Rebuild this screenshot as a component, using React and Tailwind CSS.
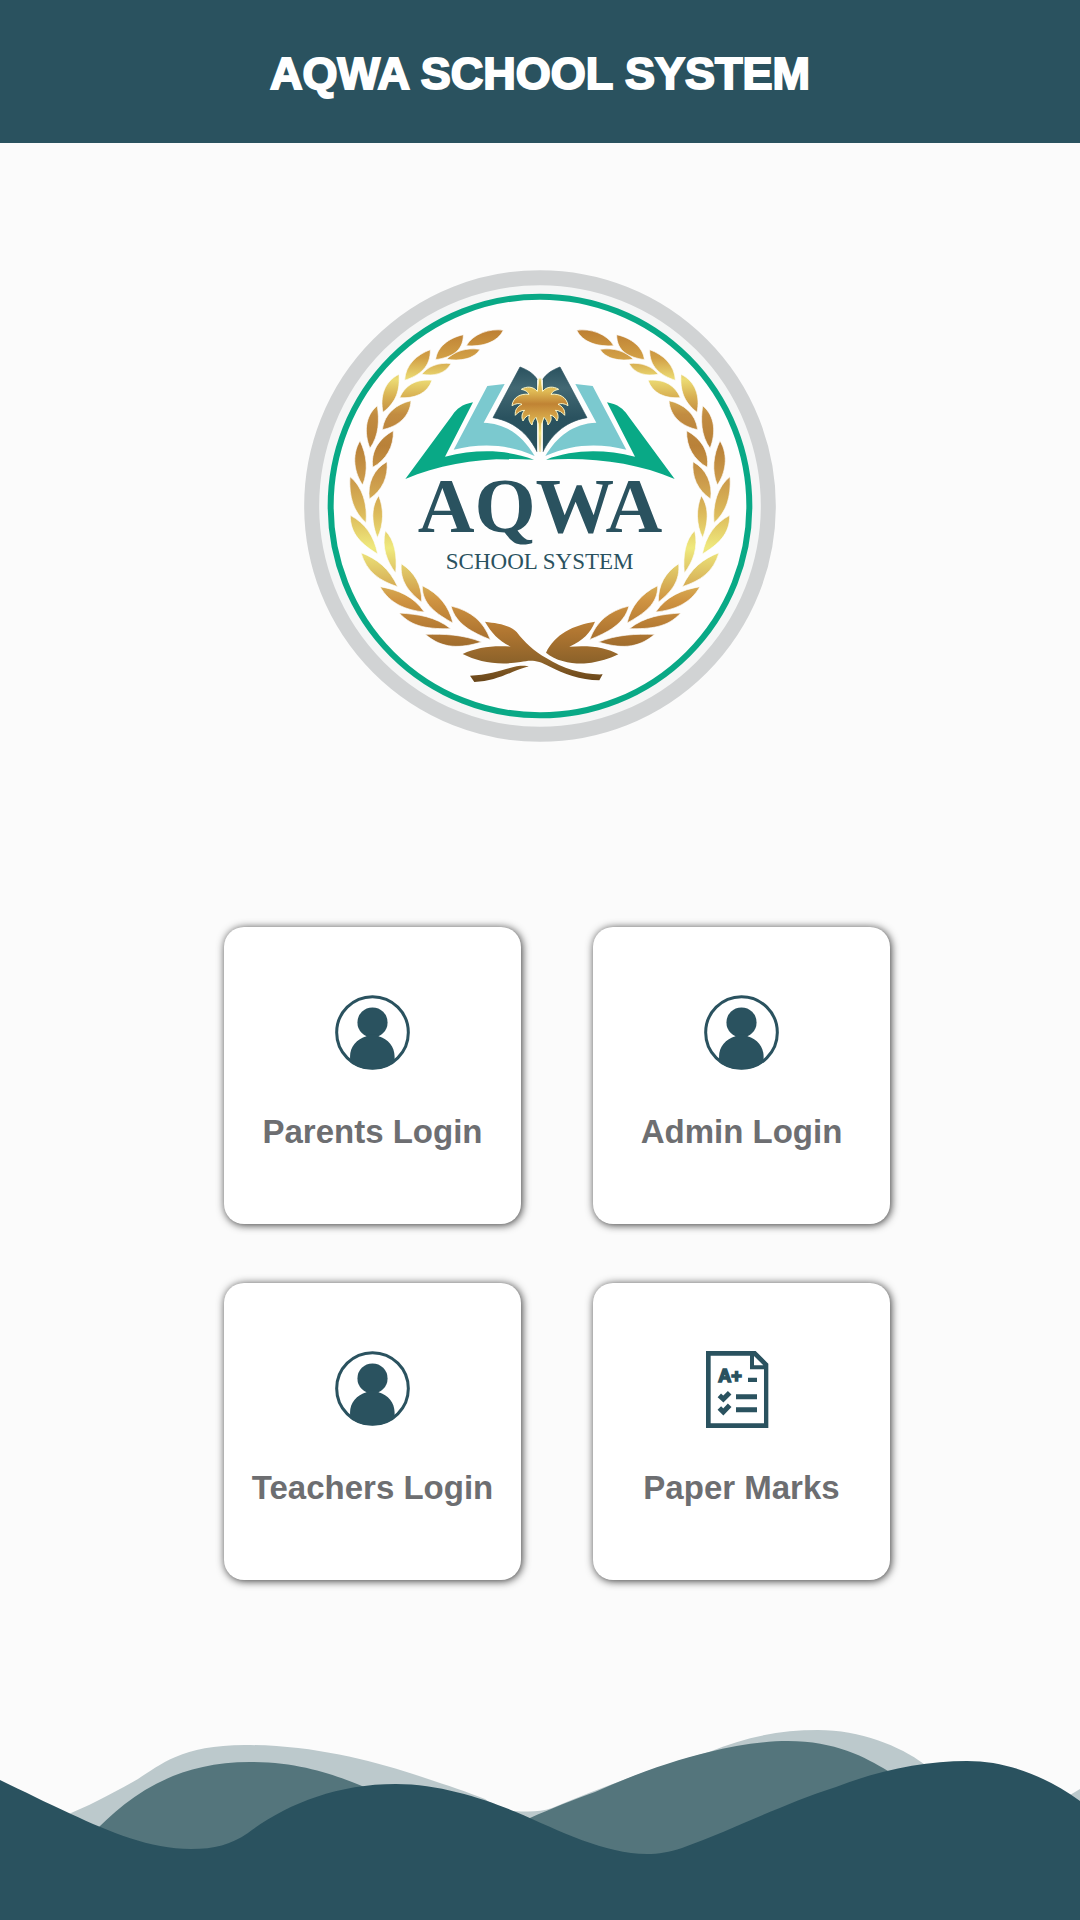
const portals = [
  { label: "Parents Login", Icon: UserIcon },
  { label: "Admin Login", Icon: UserIcon },
  { label: "Teachers Login", Icon: UserIcon },
  { label: "Paper Marks", Icon: PaperIcon },
];

// One side of the wreath, the other side is mirrored
const leaves = [
  "M640 211C600 204 548 222 529 257C575 261 622 248 640 211Z",
  "M570 268C530 262 492 274 470 298C510 304 552 298 570 268Z",
  "M520 224C476 234 440 262 437 299C482 292 520 275 520 224Z",
  "M483 311C445 306 413 320 395 343C432 349 465 342 483 311Z",
  "M421 269C380 284 346 315 344 361C390 346 422 320 421 269Z",
  "M426 361C385 357 348 370 329 413C372 416 412 402 426 361Z",
  "M327 343C283 364 269 410 279 457C320 425 330 390 327 343Z",
  "M363 422C320 432 283 460 277 509C323 500 360 470 363 422Z",
  "M262 437C224 468 222 520 240 565C268 525 268 480 262 437Z",
  "M310 512C265 537 242 575 248 622C288 600 312 560 310 512Z",
  "M210 542C183 588 194 640 218 675C236 630 230 585 210 542Z",
  "M291 605C250 628 232 670 238 717C278 690 295 650 291 605Z",
  "M180 650C176 712 192 757 228 788C233 735 218 680 180 650Z",
  "M266 707C240 745 247 795 262 833C282 795 282 745 266 707Z",
  "M181 766C180 822 216 854 263 882C252 828 226 790 181 766Z",
  "M286 812C274 862 291 905 317 939C322 885 314 840 286 812Z",
  "M213 878C230 936 268 962 323 980C297 925 262 897 213 878Z",
  "M334 911C329 962 355 995 395 1026C396 975 374 937 334 911Z",
  "M270 980C300 1032 348 1050 403 1056C370 1008 325 990 270 980Z",
  "M397 977C395 1032 440 1062 489 1089C476 1038 448 1002 397 977Z",
  "M328 1059C367 1103 420 1107 482 1106C435 1069 385 1063 328 1059Z",
  "M483 1038C498 1094 548 1117 601 1139C580 1083 543 1053 483 1038Z",
  "M406 1123C458 1168 512 1165 575 1146C517 1123 465 1122 406 1123Z",
];

function Leaves() {
  return (
    <g stroke="#fefefe" strokeWidth="2">
      {leaves.map((d) => (
        <path key={d} d={d} />
      ))}
    </g>
  );
}

function BookHalf() {
  return (
    <>
      <path
        fill="#09a986"
        d="M249 157C215 163 200 178 188 194L46 387C160 337 300 320 432 329C350 298 260 297 165 320Z"
      />
      <path
        fill="#7bc9cf"
        d="M292 108L344 102L281 218C350 220 400 260 434 318C350 280 270 280 191 299Z"
      />
      <path
        fill="url(#cover)"
        stroke="#2a525f"
        strokeWidth="2"
        d="M390 51C414 60 430 71 441 87V305C420 262 380 215 309 203Z"
      />
    </>
  );
}

function SchoolLogo() {
  return (
    <svg
      viewBox="42 30 1416 1416"
      className="w-[472px] max-w-full"
      role="img"
      aria-label="AQWA School System"
    >
      <defs>
        <linearGradient id="gold" gradientUnits="userSpaceOnUse" x1="0" y1="210" x2="0" y2="1265">
          <stop offset="0" stopColor="#bd7f33" />
          <stop offset="0.08" stopColor="#d2a046" />
          <stop offset="0.14" stopColor="#ecdc74" />
          <stop offset="0.19" stopColor="#d8b052" />
          <stop offset="0.24" stopColor="#c28c41" />
          <stop offset="0.33" stopColor="#b98138" />
          <stop offset="0.43" stopColor="#cc9b4b" />
          <stop offset="0.52" stopColor="#dcb95a" />
          <stop offset="0.62" stopColor="#efe97d" />
          <stop offset="0.7" stopColor="#dcbd60" />
          <stop offset="0.77" stopColor="#cf9341" />
          <stop offset="0.86" stopColor="#b07631" />
          <stop offset="0.94" stopColor="#8e632a" />
          <stop offset="1" stopColor="#684519" />
        </linearGradient>
        <linearGradient id="cover" x1="0" y1="0" x2="0" y2="1">
          <stop offset="0" stopColor="#2a525f" />
          <stop offset="0.25" stopColor="#426873" />
          <stop offset="0.6" stopColor="#2a525f" />
          <stop offset="1" stopColor="#284f5c" />
        </linearGradient>
        <linearGradient id="palm" x1="0" y1="0" x2="0" y2="1">
          <stop offset="0" stopColor="#e3c75a" />
          <stop offset="0.18" stopColor="#dfb954" />
          <stop offset="0.35" stopColor="#c08334" />
          <stop offset="0.6" stopColor="#dfb551" />
          <stop offset="0.75" stopColor="#f0df78" />
          <stop offset="1" stopColor="#a86f2c" />
        </linearGradient>
      </defs>

      <circle cx="750" cy="738" r="685" fill="#f5f6f6" stroke="#d1d3d4" strokeWidth="45" />
      <circle cx="750" cy="738" r="628" fill="#fefefe" stroke="#09a986" strokeWidth="18" />

      <g fill="url(#gold)">
        <Leaves />
        <g transform="translate(1500 0) scale(-1 1)">
          <Leaves />
        </g>
        <path d="M585 1085C620 1090 655 1092 680 1116C705 1148 730 1172 770 1195C820 1226 880 1245 938 1243L928 1261C870 1260 820 1240 780 1220C740 1198 720 1200 692 1206C625 1217 565 1206 518 1182C560 1162 610 1156 662 1160C625 1140 605 1120 585 1085Z" />
        <path d="M915 1085C850 1095 795 1122 768 1178C800 1205 850 1213 890 1210C930 1206 960 1195 985 1183C950 1162 900 1155 838 1160C880 1140 900 1120 915 1085Z" />
        <path d="M540 1247C600 1245 650 1225 680 1219C700 1216 710 1218 716 1219C660 1235 620 1264 553 1266Z" />
      </g>

      <g transform="translate(300 270)">
        <BookHalf />
        <g transform="translate(900 0) scale(-1 1)">
          <BookHalf />
        </g>
        <rect x="442" y="90" width="16" height="215" fill="#fefefe" />
        <path
          fill="url(#palm)"
          stroke="#fdf6c4"
          strokeWidth="3"
          strokeLinejoin="round"
          d="M447 85L442 124C430 109 410 108 394 118C406 120 413 125 417 133C391 130 369 142 366 167C377 160 387 159 396 163C382 169 374 180 376 196C384 186 393 181 404 181C396 189 393 201 399 213C404 203 410 197 419 195C414 204 417 216 426 225C428 214 432 207 438 202L445 222L448 305H452L455 222L462 202C468 207 472 214 474 225C483 216 486 204 481 195C490 197 496 203 501 213C507 201 504 189 496 181C507 181 516 186 524 196C526 180 518 169 504 163C513 159 523 160 534 167C531 142 509 130 483 133C487 125 494 120 506 118C490 108 470 109 458 124L453 85Z"
        />
        <text
          x="450"
          y="545"
          textAnchor="middle"
          fill="#2a525f"
          className="font-['Liberation_Serif',serif] text-[236px] font-bold"
        >
          AQWA
        </text>
        <text
          x="449"
          y="658"
          textAnchor="middle"
          fill="#2a525f"
          className="font-['Liberation_Serif',serif] text-[69px]"
        >
          SCHOOL SYSTEM
        </text>
      </g>
    </svg>
  );
}

function UserIcon() {
  return (
    <svg viewBox="375 257 224 224" className="mb-0.5 size-[75px]" fill="#2a525f" aria-hidden="true">
      <circle cx="487" cy="369" r="107" fill="none" stroke="#2a525f" strokeWidth="9" />
      <circle cx="487" cy="339" r="45" />
      <path d="M420 457V440C420 412 440 388 469 380V374H505V380C534 388 553 412 553 440V457A111 111 0 0 1 420 457Z" />
    </svg>
  );
}

function PaperIcon() {
  return (
    <svg viewBox="380 242 187 231" className="mr-2 h-[77px]" fill="#2a525f" aria-hidden="true">
      <path
        fillRule="evenodd"
        d="M380 242H529L567 280V473H380ZM394 256V459H554V297H512V256ZM524 257V285H552Z"
      />
      <path fill="#fff" d="M531 241H568V279Z" />
      <text
        x="417"
        y="334"
        stroke="#2a525f"
        strokeWidth="5"
        className="font-['Liberation_Sans',sans-serif] text-[54px] font-bold"
      >
        A+
      </text>
      <path d="M506 322H533V335H506ZM470 372H533V387H470ZM470 411H533V426H470Z" />
      <path
        fill="none"
        stroke="#2a525f"
        strokeWidth="15"
        d="M420 375L432 386L451 367M420 413L432 425L451 405"
      />
    </svg>
  );
}

function Waves() {
  return (
    <svg viewBox="0 0 1080 200" className="mt-auto block w-full" aria-hidden="true">
      <path
        fill="#bcc9cc"
        d="M0 110C30 100 60 98 71 93C95 83 120 69 138 59C160 45 182 25 245 25C310 25 365 39 413 54C440 63 465 71 485 79C500 90 505 91 513 91C530 92 540 92 552 88C610 64 670 42 709 32C745 17 780 10 818 10C860 10 900 26 924 44C960 70 1000 90 1040 85C1055 82 1068 77 1080 69V200H0Z"
      />
      <path
        fill="#54757c"
        d="M90 116C125 80 170 42 250 42C300 42 335 55 362 66C420 90 480 120 530 98C550 89 575 79 595 72C635 54 675 40 709 32C735 25 765 21 788 21C835 21 865 37 888 51L940 90V180H90Z"
      />
      <path
        fill="#2a525f"
        d="M0 60C25 72 45 82 71 94C110 112 150 129 191 129C215 129 230 125 248 113C285 85 335 64 396 64C440 64 485 79 516 92C560 111 605 134 647 134C659 134 669 132 682 128C735 109 780 85 836 67C880 50 925 41 967 41C1010 41 1048 58 1080 81V200H0Z"
      />
    </svg>
  );
}

export default function App() {
  return (
    <div className="flex min-h-screen flex-col bg-[#fbfbfb] font-['Liberation_Sans',sans-serif]">
      <header className="flex h-[143px] items-center justify-center bg-[#2a525f] px-6 pt-1">
        <h1 className="text-center text-[45px] font-bold text-white [-webkit-text-stroke:2px_white]">
          AQWA SCHOOL SYSTEM
        </h1>
      </header>

      <main className="flex flex-col items-center px-6 pt-[127px] pb-[140px]">
        <SchoolLogo />

        <nav className="mt-[185px] ml-[34px] grid grid-cols-2 gap-x-[72px] gap-y-[59px]">
          {portals.map(({ label, Icon }) => (
            <button
              key={label}
              type="button"
              className="flex size-[297px] cursor-pointer flex-col items-center rounded-[20px] bg-white pt-[68px] shadow-[1px_1px_8px_rgba(0,0,0,0.8)]"
            >
              <span className="flex h-[77px] items-center">
                <Icon />
              </span>
              <span className="mt-10 text-[33px] leading-10 font-bold text-[#6d6e71]">
                {label}
              </span>
            </button>
          ))}
        </nav>
      </main>

      <Waves />
    </div>
  );
}
